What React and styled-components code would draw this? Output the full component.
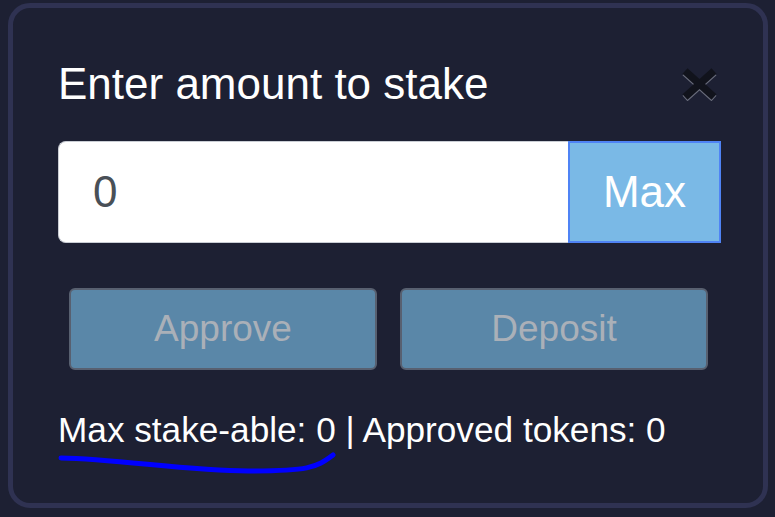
import React, { useState } from 'react';
import styled, { createGlobalStyle } from 'styled-components';

const GlobalStyle = createGlobalStyle`
  html, body {
    margin: 0;
    background: #1d2033;
    font-family: "Liberation Sans", Arial, sans-serif;
  }
`;

const Page = styled.div`
  padding: 3px 7px 9px 8px;
`;

const Panel = styled.div`
  box-sizing: border-box;
  width: 760px;
  height: 505px;
  border: 5px solid #2f3252;
  border-radius: 22px;
  background: #1d2033;
  padding: 50px 42px 0 45px;
`;

const Header = styled.div`
  display: flex;
  align-items: center;
  justify-content: space-between;
`;

const Title = styled.h2`
  margin: 0;
  font-size: 44px;
  font-weight: 400;
  line-height: 1.2;
  color: #ffffff;
`;

const CloseButton = styled.button`
  display: flex;
  padding: 0;
  margin-right: 4px;
  border: none;
  background: transparent;
  cursor: pointer;
`;

const InputGroup = styled.div`
  display: flex;
  height: 102px;
  margin-top: 30px;
`;

const AmountInput = styled.input`
  flex: 1;
  min-width: 0;
  box-sizing: border-box;
  border: 1px solid #c9cdd4;
  border-right: none;
  border-radius: 8px 0 0 8px;
  padding: 0 0 0 34px;
  font-family: inherit;
  font-size: 44px;
  color: #495057;
  background: #ffffff;
  outline: none;
`;

const MaxButton = styled.button`
  width: 153px;
  box-sizing: border-box;
  border: 2px solid #4f83f5;
  background: #7ab9e6;
  color: #ffffff;
  font-family: inherit;
  font-size: 44px;
  cursor: pointer;
`;

const ActionRow = styled.div`
  display: flex;
  gap: 23px;
  margin-top: 45px;
  padding: 0 13px 0 11px;
`;

const ActionButton = styled.button`
  flex: 1;
  height: 82px;
  box-sizing: border-box;
  border: 2px solid #586070;
  border-radius: 6px;
  background: #5a87a8;
  color: #aab0b8;
  font-family: inherit;
  font-size: 37px;
  cursor: default;
`;

const Footer = styled.p`
  position: relative;
  margin: 39px 0 0;
  font-size: 35.2px;
  line-height: 1.2;
  color: #ffffff;
`;

const Scribble = styled.svg`
  position: absolute;
  left: 0;
  top: 0;
  overflow: visible;
  pointer-events: none;
`;

const CloseIcon = () => (
  <svg width="35" height="33" viewBox="0 0 35 33">
    <g strokeWidth="7.5" strokeLinecap="butt">
      <line x1="3" y1="4.5" x2="32" y2="30.5" stroke="#6a6d7c" />
      <line x1="32" y1="4.5" x2="3" y2="30.5" stroke="#6a6d7c" />
      <line x1="3" y1="3" x2="32" y2="29" stroke="#11131c" />
      <line x1="32" y1="3" x2="3" y2="29" stroke="#11131c" />
    </g>
  </svg>
);

export default function App() {
  const [amount, setAmount] = useState('0');

  return (
    <>
      <GlobalStyle />
      <Page>
        <Panel>
          <Header>
            <Title>Enter amount to stake</Title>
            <CloseButton aria-label="Close">
              <CloseIcon />
            </CloseButton>
          </Header>
          <InputGroup>
            <AmountInput value={amount} onChange={(e) => setAmount(e.target.value)} />
            <MaxButton onClick={() => setAmount('0')}>Max</MaxButton>
          </InputGroup>
          <ActionRow>
            <ActionButton disabled>Approve</ActionButton>
            <ActionButton disabled>Deposit</ActionButton>
          </ActionRow>
          <Footer>
            Max stake-able: 0 | Approved tokens: 0
            <Scribble width="280" height="70">
              <path
                d="M3 49 C 60 50, 130 62, 190 62 S 258 59, 275 46"
                fill="none"
                stroke="#0000ff"
                strokeWidth="5"
                strokeLinecap="round"
              />
            </Scribble>
          </Footer>
        </Panel>
      </Page>
    </>
  );
}
